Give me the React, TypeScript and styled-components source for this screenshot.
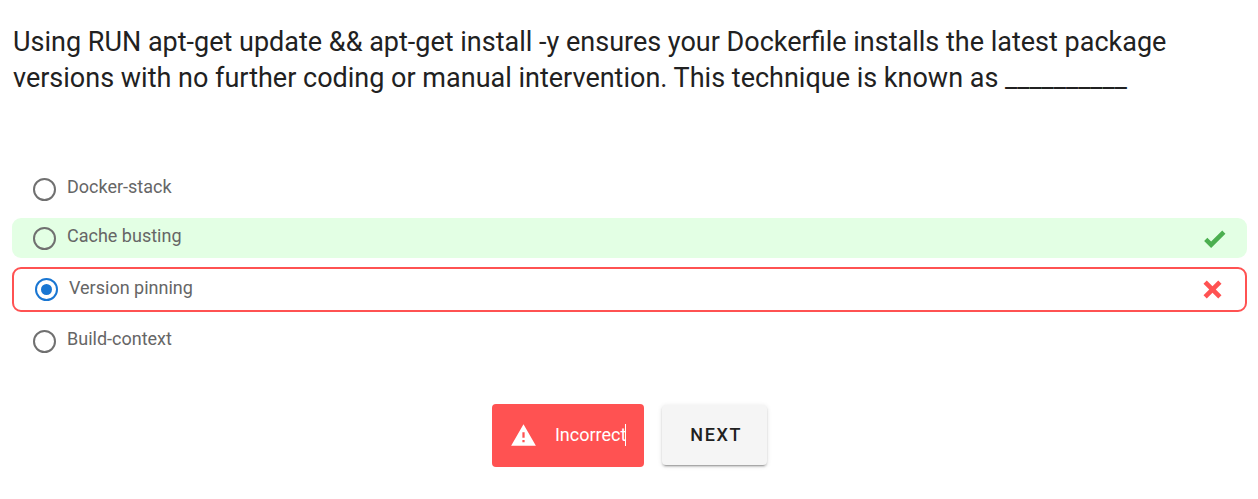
import React, { useState } from "react";
import styled, { createGlobalStyle, css } from "styled-components";

const GlobalStyle = createGlobalStyle`
  *, *::before, *::after { box-sizing: border-box; }
  body {
    margin: 0;
    background: #fff;
    color: #212121;
    font-family: Roboto, "Liberation Sans", sans-serif;
  }
`;

type Result = "correct" | "wrong" | "none";

const Page = styled.main`
  padding: 24px 11px 24px 12px;
`;

const Question = styled.h1`
  margin: 0 0 73px;
  padding: 0 1px;
  font-size: 27px;
  line-height: 36px;
  font-weight: 400;
`;

const Options = styled.div`
  display: flex;
  flex-direction: column;
  gap: 9px;
`;

const Option = styled.label<{ $result: Result }>`
  display: flex;
  align-items: center;
  gap: 11px;
  min-height: 40px;
  padding: 0 19px 0 21px;
  border-radius: 9px;
  color: #666;
  font-size: 18px;
  line-height: 24px;
  cursor: pointer;
  ${({ $result }) => $result === "correct" && css`background: #e3ffe4;`}
  ${({ $result }) => $result === "wrong" && css`
    min-height: 45px;
    border: 2px solid #ff5252;
  `}
`;

const OptionText = styled.span`
  flex: 1;
  padding-bottom: 4px;
`;

const Radio = styled.input`
  appearance: none;
  display: grid;
  place-items: center;
  width: 23px;
  height: 23px;
  margin: 0;
  border: 2px solid #707070;
  border-radius: 50%;
  background: transparent;
  &:checked { border-color: #1976d2; }
  &:checked::before {
    content: "";
    width: 11px;
    height: 11px;
    border-radius: 50%;
    background: #1976d2;
  }
`;

const Icon = styled.svg`
  flex: none;
  width: 27px;
  height: 27px;
  fill: currentColor;
`;

const ResultIcon = styled(Icon)<{ $result: Result }>`
  color: ${({ $result }) => ($result === "correct" ? "#4caf50" : "#ff5252")};
`;

const Actions = styled.div`
  display: flex;
  justify-content: center;
  align-items: flex-start;
  gap: 18px;
  margin-top: 43px;
`;

const Alert = styled.div`
  display: flex;
  align-items: center;
  gap: 18px;
  padding: 18px;
  border-radius: 4px;
  background: #ff5252;
  color: #fff;
  font-size: 18px;
  line-height: 25px;
`;

const AlertText = styled.span`
  position: relative;
  padding-bottom: 2px;
`;

const Caret = styled.span`
  position: absolute;
  right: 0;
  top: 2px;
  width: 1px;
  height: 22px;
  background: #fff;
`;

const NextButton = styled.button`
  min-height: 60px;
  margin-top: 1px;
  padding: 0 25px 0 28px;
  border: 0;
  border-radius: 4px;
  background: #f5f5f5;
  color: #212121;
  font: 500 18px/24px Roboto, "Liberation Sans", sans-serif;
  letter-spacing: 0.09em;
  text-transform: uppercase;
  box-shadow: 0 3px 1px -2px rgba(0, 0, 0, 0.2), 0 2px 2px 0 rgba(0, 0, 0, 0.14),
    0 1px 5px 0 rgba(0, 0, 0, 0.12);
  cursor: pointer;
`;

const paths = {
  correct: "M9 20.42 2.79 14.21l2.83-2.83L9 14.77l9.88-9.89 2.83 2.83L9 20.42Z",
  wrong:
    "M20 6.91 17.09 4 12 9.09 6.91 4 4 6.91 9.09 12 4 17.09 6.91 20 12 14.91 17.09 20 20 17.09 14.91 12 20 6.91Z",
  alert: "M13 14h-2V9h2v5Zm0 4h-2v-2h2v2ZM1 21h22L12 2 1 21Z",
};

const answers: { text: string; result: Result }[] = [
  { text: "Docker-stack", result: "none" },
  { text: "Cache busting", result: "correct" },
  { text: "Version pinning", result: "wrong" },
  { text: "Build-context", result: "none" },
];

export default function App() {
  const [selected, setSelected] = useState("Version pinning");
  return (
    <>
      <GlobalStyle />
      <Page>
        <Question id="question">
          Using RUN apt-get update &amp;&amp; apt-get install -y ensures your Dockerfile installs
          the latest package versions with no further coding or manual intervention. This
          technique is known as __________
        </Question>
        <Options role="radiogroup" aria-labelledby="question">
          {answers.map(({ text, result }) => (
            <Option key={text} $result={result}>
              <Radio
                type="radio"
                name="answer"
                value={text}
                checked={selected === text}
                onChange={() => setSelected(text)}
              />
              <OptionText>{text}</OptionText>
              {result !== "none" && (
                <ResultIcon $result={result} viewBox="0 0 24 24" aria-hidden="true">
                  <path d={paths[result]} />
                </ResultIcon>
              )}
            </Option>
          ))}
        </Options>
        <Actions>
          <Alert role="alert">
            <Icon viewBox="0 0 24 24" aria-hidden="true">
              <path d={paths.alert} />
            </Icon>
            <AlertText>
              Incorrect
              <Caret />
            </AlertText>
          </Alert>
          <NextButton type="button">Next</NextButton>
        </Actions>
      </Page>
    </>
  );
}
